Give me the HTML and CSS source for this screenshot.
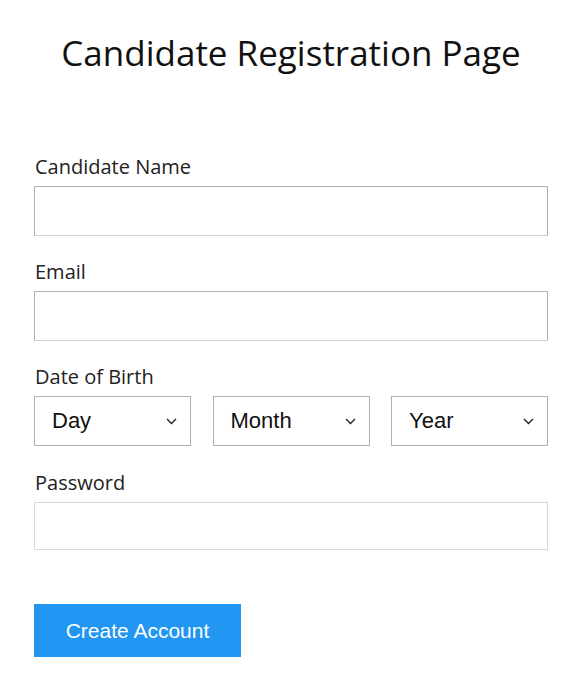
FILE: index.html
```html
<!DOCTYPE html>
<html>
<head>
<meta charset="utf-8">
<link rel="stylesheet" href="styles.css">
</head>
<body>
<div class="page">
  <h1 class="title">Candidate Registration Page</h1>
  <form class="form">
    <label class="label">Candidate Name</label>
    <input class="field field-dark" type="text">
    <label class="label">Email</label>
    <input class="field field-dark" type="text">
    <label class="label">Date of Birth</label>
    <div class="dob">
      <div class="select"><span>Day</span><svg class="chev" viewBox="0 0 11 7" width="11" height="7"><path d="M1 1l4.5 4.5L10 1" fill="none" stroke="#222" stroke-width="1.4"/></svg></div>
      <div class="select"><span>Month</span><svg class="chev" viewBox="0 0 11 7" width="11" height="7"><path d="M1 1l4.5 4.5L10 1" fill="none" stroke="#222" stroke-width="1.4"/></svg></div>
      <div class="select"><span>Year</span><svg class="chev" viewBox="0 0 11 7" width="11" height="7"><path d="M1 1l4.5 4.5L10 1" fill="none" stroke="#222" stroke-width="1.4"/></svg></div>
    </div>
    <label class="label">Password</label>
    <input class="field field-light" type="password">
    <div class="actions">
      <button type="button" class="btn">Create Account</button>
    </div>
  </form>
</div>
</body>
</html>
```
FILE: styles.css
```css
html, body {
  margin: 0;
  padding: 0;
  background: #fff;
}
.page {
  width: 514px;
  margin-left: 34px;
  font-family: "Open Sans", sans-serif;
  color: #1a1a1a;
}
.title {
  margin: 0;
  padding-top: 29px;
  font-size: 35px;
  font-weight: 400;
  line-height: 48px;
  text-align: center;
  color: #111;
}
.form {
  display: flex;
  flex-direction: column;
  margin-top: 76px;
}
.label {
  display: block;
  font-size: 20px;
  line-height: 27px;
  color: #222;
  margin-bottom: 6px;
  padding-left: 1px;
}
.field {
  box-sizing: border-box;
  width: 514px;
  height: 50px;
  margin: 0 0 22px 0;
  background: #fff;
  outline: none;
}
.field-dark {
  border: 1px solid #b0b0b0;
  border-bottom-color: #cfcfcf;
}
.field-light {
  border: 1px solid #d8d8d8;
  height: 48px;
}
.dob {
  display: flex;
  justify-content: space-between;
  margin-bottom: 23px;
}
.select {
  box-sizing: border-box;
  width: 157px;
  height: 50px;
  border: 1px solid #b0b0b0;
  display: flex;
  align-items: center;
  justify-content: space-between;
  padding: 0 13px 0 17px;
  font-family: "Liberation Sans", Arial, sans-serif;
  font-size: 22px;
  color: #111;
}
.chev {
  display: block;
}
.actions {
  margin-top: 32px;
}
.btn {
  width: 207px;
  height: 53px;
  border: none;
  background: #2196f3;
  color: #fff;
  font-family: "Liberation Sans", Arial, sans-serif;
  font-size: 21px;
  padding: 0;
  cursor: pointer;
}
```
